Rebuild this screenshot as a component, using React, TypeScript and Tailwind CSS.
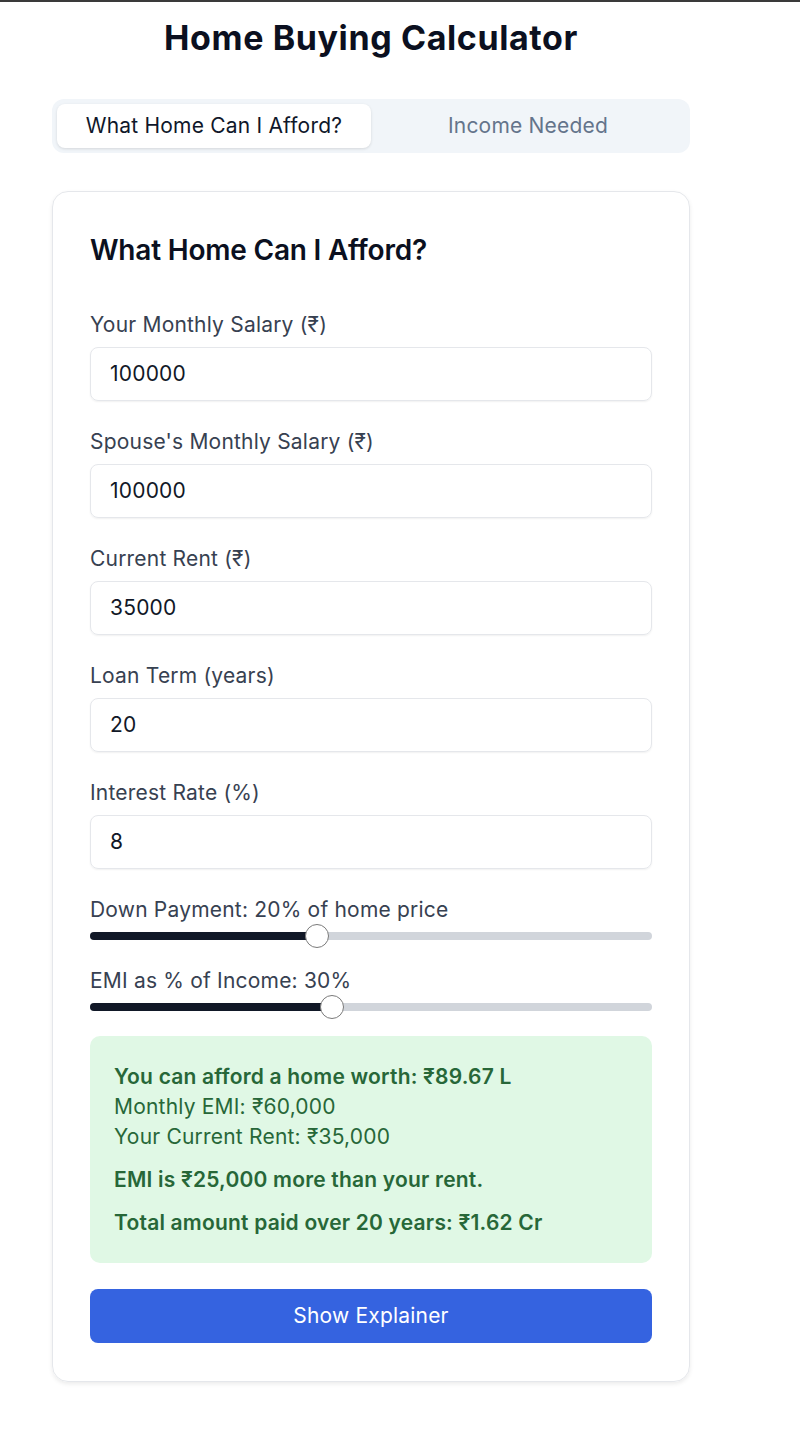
import React from "react";

function Field({ label, value }: { label: string; value: string }) {
  return (
    <div className="flex flex-col">
      <label className="text-[21px] leading-[28px] tracking-[0.2px] text-[#374151]">{label}</label>
      <div className="mt-[8px] h-[54px] rounded-[8px] border border-[#e5e7eb] shadow-[0_1px_2px_rgba(0,0,0,0.06)] flex items-center pl-[19px] text-[21px] tracking-[0.2px] text-[#111827]">
        {value}
      </div>
    </div>
  );
}

function Slider({ label, pct }: { label: string; pct: number }) {
  return (
    <div className="flex flex-col">
      <div className="text-[21px] leading-[28px] tracking-[0.2px] text-[#374151]">{label}</div>
      <div className="relative h-[24px] flex items-center">
        <div className="w-full h-[8px] rounded-full bg-[#d1d5db]">
          <div className="h-full rounded-full bg-[#111827]" style={{ width: `${pct}%` }} />
        </div>
        <div
          className="absolute top-0 w-[24px] h-[24px] rounded-full bg-white border-[1.5px] border-[#7a7a7a]"
          style={{ left: `calc(${pct}% - 12px)` }}
        />
      </div>
    </div>
  );
}

export default function App() {
  return (
    <div
      className="w-[800px] min-h-[1446px] bg-white border-t-2 border-[#3a3a3a]"
      style={{ fontFamily: "Inter, 'Noto Sans', sans-serif" }}
    >
      <div className="ml-[52px] w-[638px]">
        <h1 className="text-center text-[34px] leading-[40px] font-bold text-[#0b1020] pt-[16px] tracking-[0.6px]">
          Home Buying Calculator
        </h1>
        <div className="mt-[41px] h-[54px] rounded-[12px] bg-[#f1f5f9] p-[5px] flex">
          <div className="flex-1 rounded-[8px] bg-white shadow-[0_1px_3px_rgba(0,0,0,0.12)] flex items-center justify-center text-[21px] tracking-[0.2px] text-[#0f172a]">
            What Home Can I Afford?
          </div>
          <div className="flex-1 flex items-center justify-center text-[21px] tracking-[0.2px] text-[#64748b]">
            Income Needed
          </div>
        </div>
        <div className="mt-[38px] rounded-[16px] border border-[#e5e7eb] shadow-[0_2px_4px_rgba(0,0,0,0.08)] px-[37px] pt-[40px] pb-[38px]">
          <h2 className="text-[28px] leading-[36px] font-semibold text-[#0b1020] tracking-[-0.2px]">
            What Home Can I Afford?
          </h2>
          <div className="mt-[43px] flex flex-col gap-[27px]">
            <Field label="Your Monthly Salary (₹)" value="100000" />
            <Field label="Spouse's Monthly Salary (₹)" value="100000" />
            <Field label="Current Rent (₹)" value="35000" />
            <Field label="Loan Term (years)" value="20" />
            <Field label="Interest Rate (%)" value="8" />
          </div>
          <div className="mt-[27px] flex flex-col gap-[19px]">
            <Slider label="Down Payment: 20% of home price" pct={40.4} />
            <Slider label="EMI as % of Income: 30%" pct={43} />
          </div>
          <div className="mt-[17px] rounded-[10px] bg-[#e0f8e5] px-[24px] pt-[26px] pb-[25px] text-[#276738] text-[21px] tracking-[0.2px]">
            <div className="font-semibold leading-[30px]">You can afford a home worth: ₹89.67 L</div>
            <div className="leading-[30px]">Monthly EMI: ₹60,000</div>
            <div className="leading-[30px]">Your Current Rent: ₹35,000</div>
            <div className="mt-[13px] font-semibold leading-[30px]">EMI is ₹25,000 more than your rent.</div>
            <div className="mt-[13px] font-semibold leading-[30px]">Total amount paid over 20 years: ₹1.62 Cr</div>
          </div>
          <button className="mt-[26px] w-full h-[54px] rounded-[8px] bg-[#3563e0] text-white text-[21px] tracking-[0.2px]">
            Show Explainer
          </button>
        </div>
      </div>
    </div>
  );
}
